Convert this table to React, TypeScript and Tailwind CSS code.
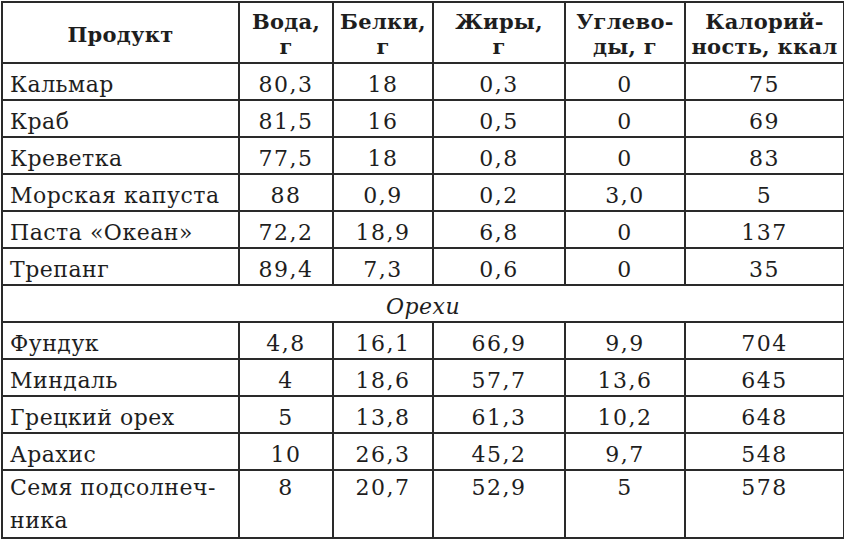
const rows1 = [
  ["Кальмар", "80,3", "18", "0,3", "0", "75"],
  ["Краб", "81,5", "16", "0,5", "0", "69"],
  ["Креветка", "77,5", "18", "0,8", "0", "83"],
  ["Морская капуста", "88", "0,9", "0,2", "3,0", "5"],
  ["Паста «Океан»", "72,2", "18,9", "6,8", "0", "137"],
  ["Трепанг", "89,4", "7,3", "0,6", "0", "35"],
];

const rows2 = [
  ["Фундук", "4,8", "16,1", "66,9", "9,9", "704"],
  ["Миндаль", "4", "18,6", "57,7", "13,6", "645"],
  ["Грецкий орех", "5", "13,8", "61,3", "10,2", "648"],
  ["Арахис", "10", "26,3", "45,2", "9,7", "548"],
];

const cell = "border-2 border-[#2a2a2a] p-0";

function Row({ r }: { r: string[] }) {
  return (
    <tr className="h-[37px]">
      <td className={`${cell} pl-[7px] pt-[5px] text-left`}>{r[0]}</td>
      {r.slice(1).map((v, i) => (
        <td key={i} className={`${cell} pt-[5px] text-center tracking-[1.5px]`}>
          {v}
        </td>
      ))}
    </tr>
  );
}

export default function App() {
  return (
    <div className="min-h-screen bg-white pl-[1px] pt-[1px]">
      <table
        className="w-[842px] table-fixed border-collapse text-[22px] leading-[25px] tracking-[0.5px] text-[#1e1e1e]"
        style={{ fontFamily: '"DejaVu Serif", "Liberation Serif", serif' }}
      >
        <colgroup>
          <col className="w-[237px]" />
          <col className="w-[94px]" />
          <col className="w-[100px]" />
          <col className="w-[132px]" />
          <col className="w-[120px]" />
          <col className="w-[159px]" />
        </colgroup>
        <thead>
          <tr className="h-[61px] text-[21px] font-bold tracking-[0.3px]">
            <th className={`${cell} pt-[3px] text-center`}>Продукт</th>
            <th className={`${cell} pt-[3px] text-center`}>
              Вода,
              <br />г
            </th>
            <th className={`${cell} pt-[3px] text-center`}>
              Белки,
              <br />г
            </th>
            <th className={`${cell} pt-[3px] text-center`}>
              Жиры,
              <br />г
            </th>
            <th className={`${cell} pt-[3px] text-center`}>
              Углево-
              <br />
              ды, г
            </th>
            <th className={`${cell} pt-[3px] text-center`}>
              Калорий-
              <br />
              ность, ккал
            </th>
          </tr>
        </thead>
        <tbody>
          {rows1.map((r) => (
            <Row key={r[0]} r={r} />
          ))}
          <tr className="h-[37px]">
            <td colSpan={6} className={`${cell} pt-[5px] text-center italic`}>
              Орехи
            </td>
          </tr>
          {rows2.map((r) => (
            <Row key={r[0]} r={r} />
          ))}
          <tr className="h-[64px] align-top">
            <td className={`${cell} pl-[7px] text-left leading-[33px]`}>
              Семя подсолнеч-
              <br />
              ника
            </td>
            {["8", "20,7", "52,9", "5", "578"].map((v, i) => (
              <td key={i} className={`${cell} text-center leading-[33px] tracking-[1.5px]`}>
                {v}
              </td>
            ))}
          </tr>
        </tbody>
      </table>
    </div>
  );
}
